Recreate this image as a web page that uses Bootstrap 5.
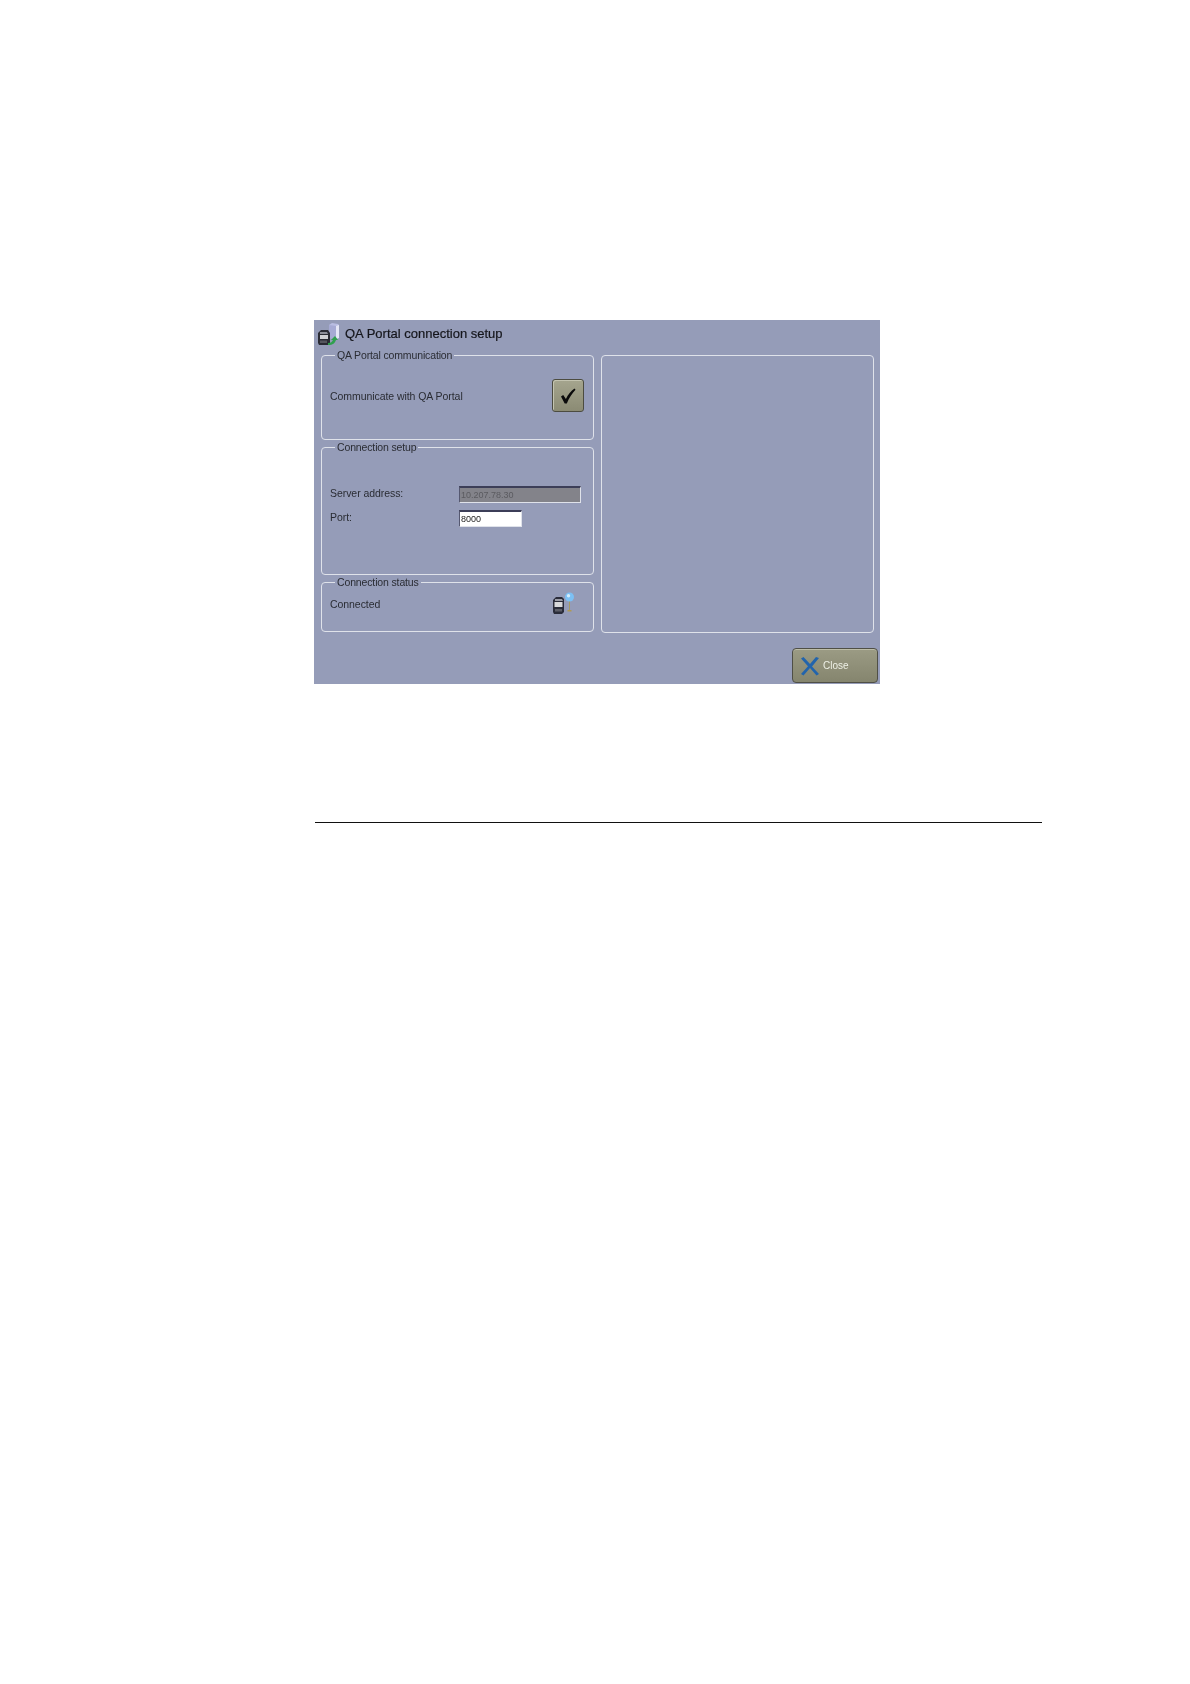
<!DOCTYPE html>
<html lang="en">
<head>
<meta charset="utf-8">
<title>QA Portal connection setup</title>
<link rel="stylesheet" href="https://cdn.jsdelivr.net/npm/bootstrap@5.3.0/dist/css/bootstrap.min.css">
<style>
body { background:#fff; font-family:"Liberation Sans",Arial,sans-serif; color:#2a2c33; }
.sheet { padding:320px 0 0 314px; }
.panel-shot { width:566px; height:364px; background:#959cb8; padding:0 5px 0 7px; font-size:10.5px; letter-spacing:-.06px; line-height:14px; filter:blur(.4px); }
.panel-head { height:28px; margin-left:-4px; gap:4px; }
.panel-title { font-size:13px; line-height:16px; color:#15161c; font-weight:400; margin:0; -webkit-text-stroke:.2px #15161c; letter-spacing:0; }
.left-col { width:273px; }
.grp { border:1px solid #dfe2ea; border-radius:4px; margin:0; min-width:0; padding:0 9px 0 8px; }
.grp legend { float:none; width:auto; font-size:10.5px; letter-spacing:-.14px; line-height:14px; margin:0 0 0 5px; padding:0 2px; color:#2a2c33; }
.grp-a { height:92px; }
.grp-b { height:135px; }
.grp-c { height:57px; }
.grp-side { width:273px; height:278px; margin:7px 0 0 7px; border:1px solid #dfe2ea; border-radius:4px; }
.check-btn { width:32px; height:33px; background:linear-gradient(#a5a58e,#8b8b74); border:1px solid #4c4c40; border-radius:3px; padding:0; box-shadow:inset 1px 1px 0 #c4c4b0; margin-top:17px; }
.row-a { align-items:flex-start; }
.row-a .lbl { width:auto; margin-top:27px; }
.lbl { width:129px; flex:none; }
.rows { padding-top:32px; gap:7px; }
.fld { height:17px; font-size:9px; line-height:13px; padding:0 1px; letter-spacing:0; border:solid 1px; border-color:#3c3e58 #dfe2ea #dfe2ea #555870; border-top-width:2px; border-radius:0; }
.fld-off { width:122px; background:#83838a; color:#5b5b60; }
.fld-on { width:63px; background:#fff; color:#222; }
.row-c { padding:3px 10px 0 0; }
.row-c .lbl { margin-top:5px; }
.foot { padding-top:15px; margin-right:-3px; }
.close-btn { width:86px; height:35px; background:linear-gradient(#9b9b84,#85856e); border:1px solid #4f4f46; border-radius:4px; padding:0 0 0 7px; gap:3px; color:#eef0e6; font-size:10px; letter-spacing:0; box-shadow:inset 0 1px 0 #bdbda8; }
.rule { width:727px; margin:138px 0 0 1px; border-top:1px solid #111; opacity:1; }
</style>
</head>
<body>
<div class="sheet">
  <div class="panel-shot">
    <div class="panel-head d-flex align-items-center">
      <svg width="24" height="24" viewBox="0 0 24 24" aria-hidden="true">
        <path d="M12 3l3-2 6 1 1 1v13l-3 1-7-1z" fill="#b9bde2"/>
        <path d="M12 3l7 1v13l-7-1z" fill="#a6aad4"/>
        <path d="M19 4l3-1v13l-3 1z" fill="#e4e6f6"/>
        <path d="M1 11l3-3h7l2 3v10l-2 2H2l-1-2z" fill="#2a2b34"/>
        <path d="M3 10h7l1 2H3z" fill="#8c8e98"/>
        <path d="M3 13h8v4H3z" fill="#cfd0d4"/>
        <path d="M3 18.500h7V21H3z" fill="#55565e"/>
        <path d="M11 21c3 0 4-1 5-3h-2l4-4 3 4h-2c-1 3-3 5-8 5z" fill="#2fa04e"/>
      </svg>
      <h1 class="panel-title">QA Portal connection setup</h1>
    </div>
    <div class="d-flex">
      <div class="left-col d-flex flex-column">
        <fieldset class="grp grp-a">
          <legend>QA Portal communication</legend>
          <div class="row-a d-flex justify-content-between">
            <span class="lbl">Communicate with QA Portal</span>
            <button type="button" class="check-btn d-flex align-items-center justify-content-center" aria-label="Communicate with QA Portal">
              <svg width="20" height="20" viewBox="0 0 20 20" aria-hidden="true"><path d="M3 10.500l2.200-1.600 2.700 4C10 8.500 13 5 16.500 2.500l1 1.200C14 7.500 11 12 8.800 17.500H6.700z" fill="#0b0b0b"/></svg>
            </button>
          </div>
        </fieldset>
        <fieldset class="grp grp-b">
          <legend>Connection setup</legend>
          <div class="rows d-flex flex-column">
            <div class="d-flex"><label class="lbl" for="srv">Server address:</label><input id="srv" class="fld fld-off" value="10.207.78.30" disabled></div>
            <div class="d-flex"><label class="lbl" for="prt">Port:</label><input id="prt" class="fld fld-on" value="8000"></div>
          </div>
        </fieldset>
        <fieldset class="grp grp-c">
          <legend>Connection status</legend>
          <div class="row-c d-flex justify-content-between align-items-start">
            <span class="lbl">Connected</span>
            <svg width="22" height="22" viewBox="0 0 22 22" aria-hidden="true">
              <path d="M1 8l3-3h6l2 2v13l-2 2H2l-1-2z" fill="#2a2c3a"/>
              <path d="M3 7h7l1 2H3z" fill="#9a9ca6"/>
              <path d="M2.500 10h8v5h-8z" fill="#d8d9dc"/>
              <path d="M3 17h7v2.500H3z" fill="#5c5e68"/>
              <path d="M17 9h1v9h-1z" fill="#a59a66"/>
              <path d="M15.500 18h4v1.500h-4z" fill="#b09a50"/>
              <circle cx="17.500" cy="5" r="4.500" fill="#7cc0f4"/>
              <circle cx="16.500" cy="3.800" r="1.700" fill="#d2ecfd"/>
            </svg>
          </div>
        </fieldset>
      </div>
      <div class="grp-side"></div>
    </div>
    <div class="foot d-flex justify-content-end">
      <button type="button" class="close-btn d-flex align-items-center">
        <svg width="20" height="20" viewBox="0 0 20 20" aria-hidden="true"><path d="M1 2.500L3.500 1l6.500 7 6-7 3 1-7 8.500 7 7.500-2.500 1.500L10 12l-6.500 7.500L1 18l7-7.800z" fill="#2264ac"/></svg>
        <span>Close</span>
      </button>
    </div>
  </div>
  <hr class="rule">
</div>
<script src="https://cdn.jsdelivr.net/npm/bootstrap@5.3.0/dist/js/bootstrap.bundle.min.js"></script>
</body>
</html>
